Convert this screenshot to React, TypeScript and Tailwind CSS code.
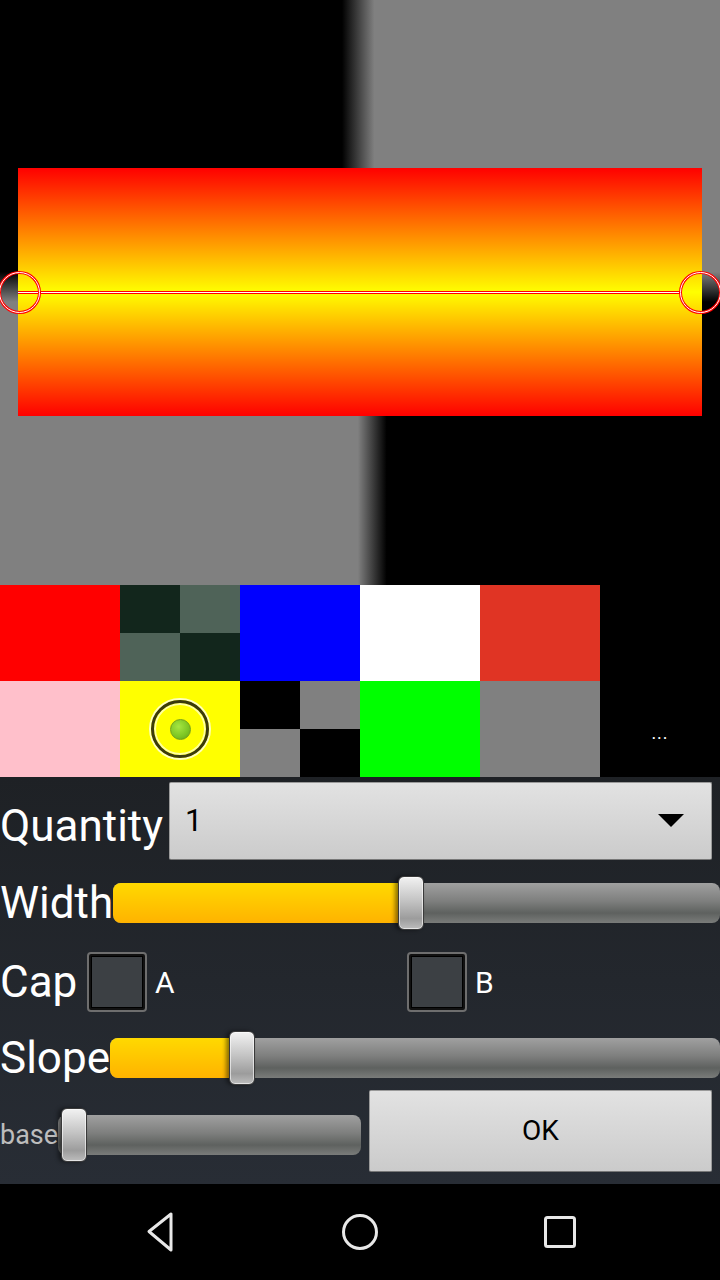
import React from 'react'

const font = { fontFamily: 'Roboto, "Noto Sans", sans-serif' }

const Thumb = ({ left }: { left: number }) => (
  <div
    className="absolute top-1/2 -translate-y-1/2 -translate-x-1/2 w-[26px] h-[54px] rounded-[6px] border border-[#3a3a3a] bg-[linear-gradient(to_bottom,#f2f2f2,#c4c4c4_45%,#9c9c9c_80%,#bdbdbd)] shadow-[-3px_0_4px_rgba(0,0,0,0.45),inset_0_0_0_1px_rgba(255,255,255,0.6)]"
    style={{ left }}
  />
)

const Slider = ({ value, fill = true, className }: { value: number; fill?: boolean; className?: string }) => (
  <div className={`relative h-[40px] rounded-[8px] bg-[linear-gradient(to_bottom,#a0a0a0,#7e7f7e_45%,#5e615f_75%,#7a7c7a)] ${className ?? ''}`}>
    {fill && (
      <div
        className="absolute left-0 top-0 h-full rounded-l-[8px] bg-[linear-gradient(to_bottom,#ffd900,#ffc200_60%,#ffb300)]"
        style={{ width: value }}
      />
    )}
    <Thumb left={value} />
  </div>
)

const Checkbox = ({ label }: { label: string }) => (
  <div className="flex items-center">
    <div className="w-[60px] h-[60px] rounded-[4px] border-2 border-[#6e6e6e] p-[2px] bg-[#111]">
      <div className="w-full h-full bg-[#3c4044] border border-black" />
    </div>
    <span className="ml-[8px] text-[30px] text-white">{label}</span>
  </div>
)

const Canvas = () => (
  <svg width="720" height="585" viewBox="0 0 720 585" className="block">
    <defs>
      <linearGradient id="topBg" x1="0" x2="1" y1="0" y2="0">
        <stop offset="0.475" stopColor="#000" />
        <stop offset="0.52" stopColor="#808080" />
      </linearGradient>
      <linearGradient id="botBg" x1="0" x2="1" y1="0" y2="0">
        <stop offset="0.497" stopColor="#808080" />
        <stop offset="0.537" stopColor="#000" />
      </linearGradient>
      <linearGradient id="edgeL" x1="0" x2="0" y1="0" y2="1">
        <stop offset="0" stopColor="#000" />
        <stop offset="1" stopColor="#808080" />
      </linearGradient>
      <linearGradient id="edgeR" x1="0" x2="0" y1="0" y2="1">
        <stop offset="0" stopColor="#808080" />
        <stop offset="1" stopColor="#000" />
      </linearGradient>
      <linearGradient id="fire" x1="0" x2="0" y1="0" y2="1">
        <stop offset="0" stopColor="#ff0000" />
        <stop offset="0.5" stopColor="#ffff00" />
        <stop offset="1" stopColor="#ff0000" />
      </linearGradient>
    </defs>
    <rect x="0" y="0" width="720" height="292" fill="url(#topBg)" />
    <rect x="0" y="292" width="720" height="293" fill="url(#botBg)" />
    <rect x="0" y="272" width="18" height="30" fill="url(#edgeL)" />
    <rect x="702" y="272" width="18" height="30" fill="url(#edgeR)" />
    <rect x="18" y="168" width="684" height="248" fill="url(#fire)" />
    <line x1="18" y1="292.5" x2="681" y2="292.5" stroke="#ff0000" strokeWidth="3" />
    <line x1="18" y1="292.5" x2="681" y2="292.5" stroke="#ffffff" strokeWidth="1" />
    <circle cx="19.5" cy="292.5" r="20" fill="none" stroke="#ff0000" strokeWidth="3" />
    <circle cx="19.5" cy="292.5" r="20" fill="none" stroke="#ffffff" strokeWidth="1" />
    <circle cx="700.5" cy="292.5" r="20" fill="none" stroke="#ff0000" strokeWidth="3" />
    <circle cx="700.5" cy="292.5" r="20" fill="none" stroke="#ffffff" strokeWidth="1" />
  </svg>
)

export default function App() {
  return (
    <div className="w-[720px] h-[1280px] bg-black flex flex-col overflow-hidden" style={font}>
      <Canvas />

      {/* Palette */}
      <div className="grid grid-cols-6">
        <div className="h-[96px] bg-[#ff0000]" />
        <div className="h-[96px] grid grid-cols-2 grid-rows-2">
          <div className="bg-[#12261c]" />
          <div className="bg-[#4f6358]" />
          <div className="bg-[#4f6358]" />
          <div className="bg-[#12261c]" />
        </div>
        <div className="h-[96px] bg-[#0000ff]" />
        <div className="h-[96px] bg-white" />
        <div className="h-[96px] bg-[#e03424]" />
        <div className="h-[96px] bg-black" />
        <div className="h-[96px] bg-[#ffc0cb]" />
        <div className="h-[96px] bg-[#ffff00] flex items-center justify-center">
          <div className="w-[58px] h-[58px] rounded-full border-[3px] border-[#3a3a0c] shadow-[0_0_0_2px_#ffffc0,inset_0_0_0_2px_#ffffa0] flex items-center justify-center">
            <div className="w-[21px] h-[21px] rounded-full bg-[radial-gradient(circle_at_40%_35%,#a6e640,#7cc524_60%,#5f9a18)] border border-[#6ea020]" />
          </div>
        </div>
        <div className="h-[96px] grid grid-cols-2 grid-rows-2">
          <div className="bg-black" />
          <div className="bg-[#808080]" />
          <div className="bg-[#808080]" />
          <div className="bg-black" />
        </div>
        <div className="h-[96px] bg-[#00ff00]" />
        <div className="h-[96px] bg-[#808080]" />
        <div className="h-[96px] bg-black flex items-end justify-center pb-[35px]">
          <span className="text-white text-[18px] leading-none tracking-[1px]">...</span>
        </div>
      </div>

      {/* Controls */}
      <div className="flex-1 flex flex-col bg-[linear-gradient(to_bottom,#1e2125,#282d35)]">
        <div className="h-[93px] flex items-start justify-between">
          <span className="mt-[24px] text-[44px] leading-[50px] text-white">Quantity</span>
          <div className="mr-[8px] mt-[5px] w-[543px] h-[78px] rounded-[2px] border border-[#9a9a9a] border-b-[#777] bg-[linear-gradient(to_bottom,#e2e2e2,#cbcbcb)] flex items-center justify-between">
            <span className="ml-[15px] text-[31px] text-black">1</span>
            <svg width="26" height="14" viewBox="0 0 26 14" className="mr-[27px]">
              <polygon points="0,0 26,0 13,13" fill="#000" />
            </svg>
          </div>
        </div>

        <div className="h-[65px] flex items-center">
          <span className="text-[44px] leading-none text-white">Width</span>
          <Slider value={298} className="flex-1" />
        </div>

        <div className="h-[94px] flex items-center">
          <span className="w-[77px] text-[44px] leading-none text-white">Cap</span>
          <div className="w-[320px] pl-[10px]">
            <Checkbox label="A" />
          </div>
          <div className="pl-[10px]">
            <Checkbox label="B" />
          </div>
        </div>

        <div className="h-[58px] flex items-center">
          <span className="text-[44px] leading-none text-white">Slope</span>
          <Slider value={132} className="flex-1" />
        </div>

        <div className="h-[97px] flex items-start">
          <div className="w-[361px] mt-[28px] flex items-center">
            <span className="text-[27px] leading-none text-[#bdbdbd]">base</span>
            <Slider value={16} fill={false} className="flex-1" />
          </div>
          <div className="ml-[8px] mt-[3px] w-[343px] h-[82px] rounded-[2px] border border-[#9a9a9a] border-b-[#777] bg-[linear-gradient(to_bottom,#e2e2e2,#cbcbcb)] flex items-center justify-center">
            <span className="text-[28px] text-black">OK</span>
          </div>
        </div>
      </div>

      {/* Navigation bar */}
      <div className="h-[96px] bg-black flex items-center justify-center gap-[160px]">
        <svg width="40" height="44" viewBox="0 0 40 44">
          <path d="M31 4 L31 40 L9 21.5 Z" fill="none" stroke="#e8e8e8" strokeWidth="3" strokeLinejoin="round" />
        </svg>
        <svg width="40" height="44" viewBox="0 0 40 44">
          <circle cx="20" cy="22" r="16.5" fill="none" stroke="#e8e8e8" strokeWidth="3" />
        </svg>
        <svg width="40" height="44" viewBox="0 0 40 44">
          <rect x="5.5" y="7.5" width="29" height="29" rx="2" fill="none" stroke="#e8e8e8" strokeWidth="3" />
        </svg>
      </div>
    </div>
  )
}
